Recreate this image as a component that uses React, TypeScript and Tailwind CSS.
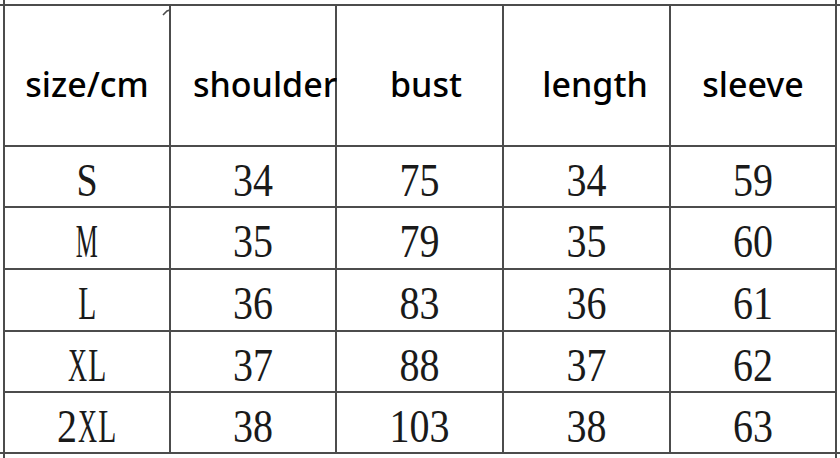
import React from "react";

const rows = [
  ["S", "34", "75", "34", "59"],
  ["M", "35", "79", "35", "60"],
  ["L", "36", "83", "36", "61"],
  ["XL", "37", "88", "37", "62"],
  ["2XL", "38", "103", "38", "63"],
];

const rowH = ["h-[59px]", "h-[60px]", "h-[60px]", "h-[59px]", "h-[59px]"];

const charScale: Record<string, string> = {
  S: "scale-x-[0.95] scale-y-[1.18]",
  M: "scale-x-[0.62] scale-y-[1.18]",
  L: "scale-x-[0.74] scale-y-[1.18]",
  X: "scale-x-[0.66] scale-y-[1.18]",
};

const headFont = { fontFamily: '"Noto Sans", "Open Sans", sans-serif' };
const numFont = { fontFamily: '"Liberation Serif", "Times New Roman", serif' };

function Cell({ text }: { text: string }) {
  return (
    <span className="flex">
      {text.split("").map((ch, k) => (
        <span key={k} className="w-[20px] flex justify-center">
          <span className={`inline-block ${charScale[ch] ?? "scale-y-[1.18]"}`}>{ch}</span>
        </span>
      ))}
    </span>
  );
}

export default function App() {
  return (
    <div className="relative w-[840px] h-[458px] bg-white overflow-hidden">
      <div className="pt-[4px] pl-[3px]">
        <div
          className="grid w-[834px] gap-[2px] p-[2px] bg-[#4c4c4c]"
          style={{ gridTemplateColumns: "164px 164px 165px 165px 164px" }}
        >
          <div className="h-[139px] bg-white flex items-center justify-center pt-[17px] text-[34px] font-medium text-black" style={headFont}>
            size/cm
          </div>
          <div className="h-[139px] bg-white flex items-center justify-start pl-[22px] pt-[17px] text-[34px] font-medium text-black whitespace-nowrap" style={headFont}>
            shoulder
          </div>
          <div className="h-[139px] bg-white flex items-center justify-center pl-[13px] pt-[17px] text-[34px] font-medium text-black" style={headFont}>
            bust
          </div>
          <div className="h-[139px] bg-white flex items-center justify-center pl-[17px] pt-[17px] text-[34px] font-medium text-black" style={headFont}>
            length
          </div>
          <div className="h-[139px] bg-white flex items-center justify-center pt-[17px] text-[34px] font-medium text-black" style={headFont}>
            sleeve
          </div>
          {rows.map((r, i) =>
            r.map((c, j) => (
              <div
                key={`${i}-${j}`}
                className={`${rowH[i]} bg-white flex items-center justify-center pt-[8px] text-[40px] leading-none text-[#1a1a1a]`}
                style={numFont}
              >
                <Cell text={c} />
              </div>
            ))
          )}
        </div>
      </div>
      <div className="absolute left-0 top-[4px] w-[840px] h-[2px] bg-[#4c4c4c]" />
      <div className="absolute left-[3px] top-0 w-[2px] h-[458px] bg-[#4c4c4c]" />
      <div className="absolute left-[835px] top-0 w-[2px] h-[458px] bg-[#4c4c4c]" />
      <div className="absolute left-0 top-[452px] w-[840px] h-[2px] bg-[#4c4c4c]" />
      <svg className="absolute left-[160px] top-[5px]" width="12" height="12" viewBox="0 0 12 12">
        <path d="M3 10 L7 6 L10 5" stroke="#4c4c4c" strokeWidth="1.6" fill="none" />
      </svg>
    </div>
  );
}
